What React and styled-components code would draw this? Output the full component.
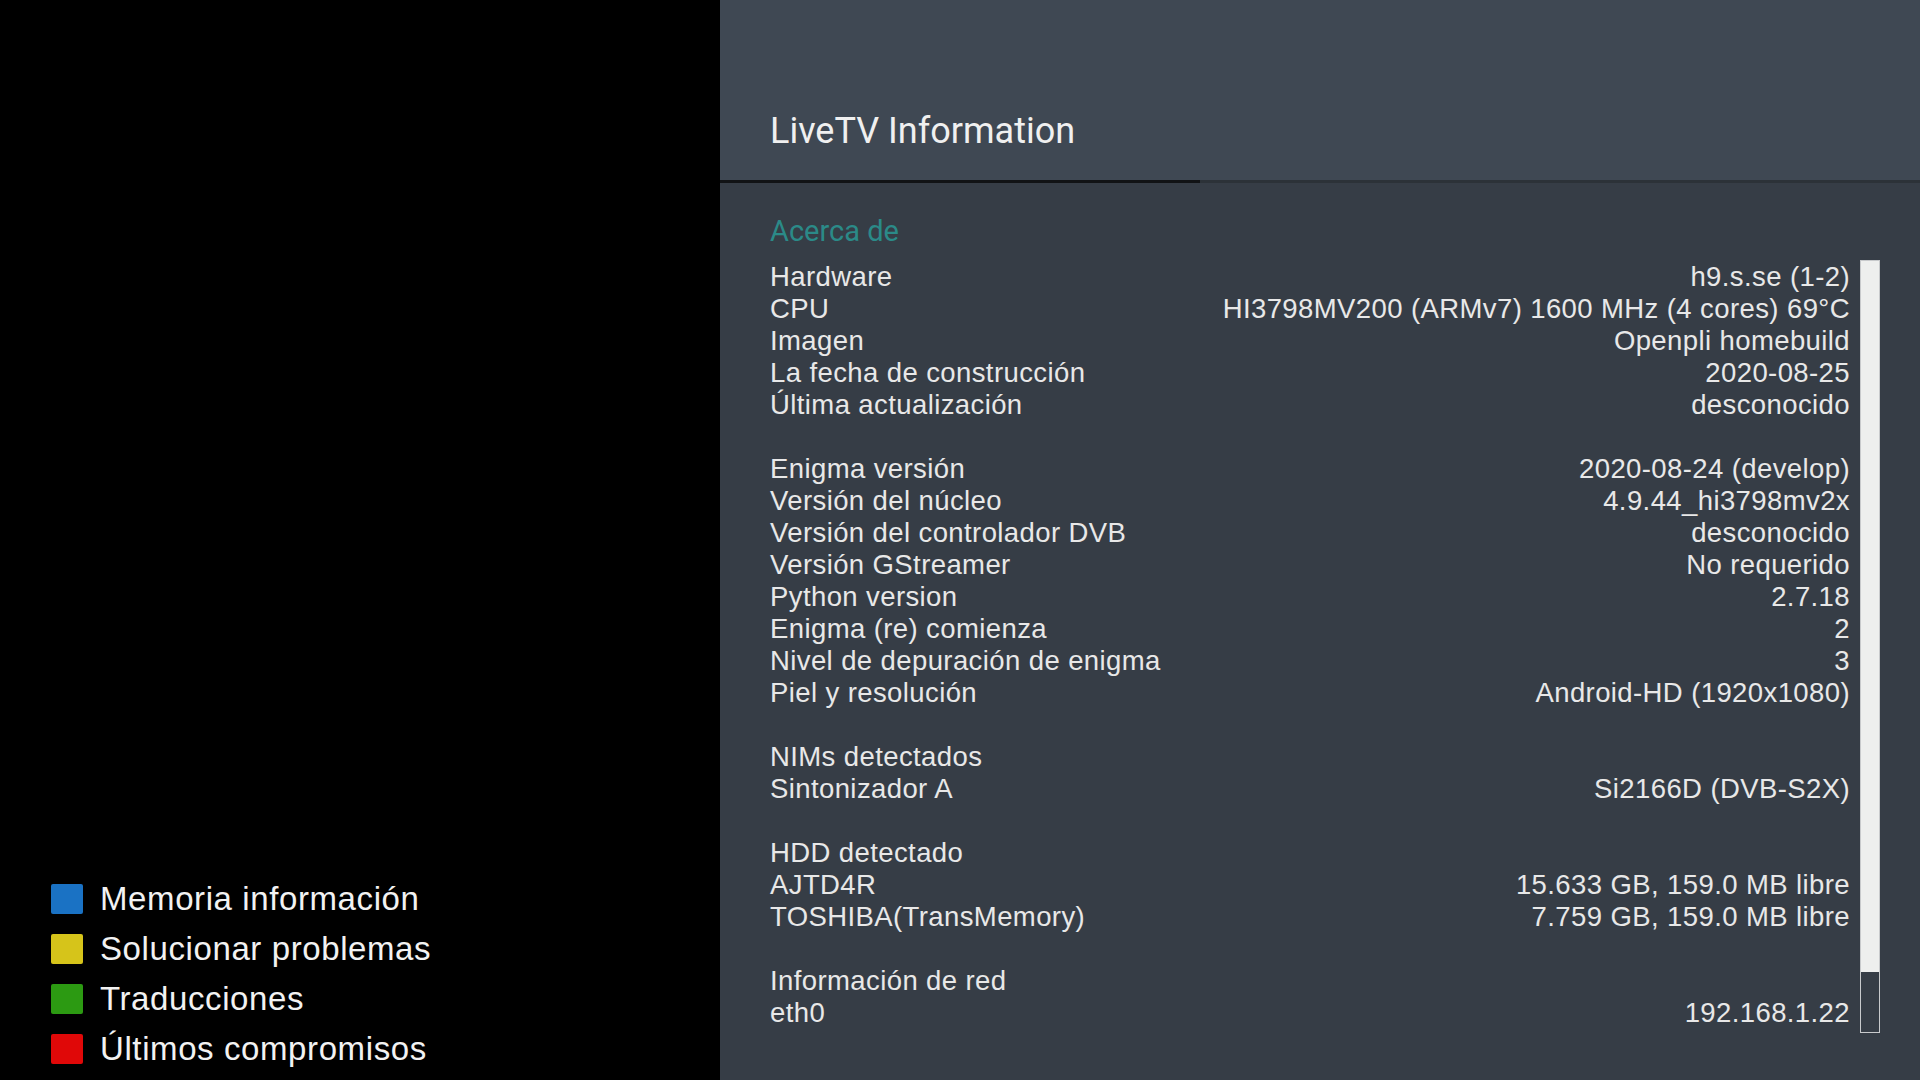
import React from "react";
import styled, { createGlobalStyle } from "styled-components";

const Global = createGlobalStyle`
  html, body { margin: 0; padding: 0; background: #000; }
  body { font-family: "Liberation Sans", Arial, sans-serif; }
  * { box-sizing: border-box; }
`;

const Screen = styled.div`
  display: flex;
  width: 1920px;
  height: 1080px;
  overflow: hidden;
`;

const Sidebar = styled.div`
  width: 720px;
  flex: none;
  background: #000;
  display: flex;
  flex-direction: column;
  justify-content: flex-end;
  padding: 0 0 6px 51px;
`;

const LegendRow = styled.div`
  display: flex;
  align-items: center;
  height: 50px;
  gap: 17px;
`;

const Swatch = styled.span`
  width: 32px;
  height: 30px;
  border-radius: 2px;
  background: ${(p) => p.$color};
  flex: none;
`;

const LegendText = styled.span`
  font-family: "Liberation Sans", Arial, sans-serif;
  font-size: 33px;
  letter-spacing: 0.6px;
  color: #f2f2f2;
`;

const Panel = styled.div`
  flex: 1;
  display: flex;
  flex-direction: column;
  background: #363d46;
`;

const Header = styled.div`
  height: 180px;
  background: #3f4853;
  display: flex;
  align-items: flex-end;
  padding: 0 0 28px 50px;
`;

const Title = styled.h1`
  margin: 0;
  font-family: Roboto, "Liberation Sans", sans-serif;
  font-weight: 400;
  font-size: 36px;
  line-height: 42px;
  color: #f0f0f0;
`;

const Divider = styled.div`
  display: flex;
  height: 3px;
`;

const DividerSeg = styled.div`
  height: 100%;
  background: ${(p) => p.$color};
  width: ${(p) => (p.$w ? p.$w + "px" : "auto")};
  flex: ${(p) => (p.$w ? "none" : "1")};
`;

const Body = styled.div`
  flex: 1;
  display: flex;
  flex-direction: column;
  padding: 32px 40px 0 50px;
`;

const SectionTitle = styled.div`
  font-family: Roboto, "Liberation Sans", sans-serif;
  font-size: 29px;
  line-height: 32px;
  color: #2b8a88;
`;

const ListArea = styled.div`
  display: flex;
  align-items: flex-start;
  gap: 10px;
  margin-top: 11px;
`;

const List = styled.div`
  flex: 1;
  padding-top: 3px;
`;

const Row = styled.div`
  display: flex;
  justify-content: space-between;
  height: 32px;
  font-family: "Liberation Sans", Arial, sans-serif;
  font-size: 27.5px;
  letter-spacing: 0.4px;
  line-height: 32px;
  color: #e8e8e8;
  white-space: nowrap;
`;

const Scrollbar = styled.div`
  width: 20px;
  height: 773px;
  margin-top: 2px;
  flex: none;
  border: 1px solid #c8cacc;
  display: flex;
  flex-direction: column;
`;

const Thumb = styled.div`
  height: 711px;
  background: #eeefee;
`;

const legend = [
  ["#1a72c4", "Memoria información"],
  ["#d6c41a", "Solucionar problemas"],
  ["#2c9a12", "Traducciones"],
  ["#e00808", "Últimos compromisos"],
];

const rows = [
  ["Hardware", "h9.s.se (1-2)"],
  ["CPU", "HI3798MV200 (ARMv7) 1600 MHz (4 cores) 69°C"],
  ["Imagen", "Openpli homebuild"],
  ["La fecha de construcción", "2020-08-25"],
  ["Última actualización", "desconocido"],
  null,
  ["Enigma versión", "2020-08-24 (develop)"],
  ["Versión del núcleo", "4.9.44_hi3798mv2x"],
  ["Versión del controlador DVB", "desconocido"],
  ["Versión GStreamer", "No requerido"],
  ["Python version", "2.7.18"],
  ["Enigma (re) comienza", "2"],
  ["Nivel de depuración de enigma", "3"],
  ["Piel y resolución", "Android-HD (1920x1080)"],
  null,
  ["NIMs detectados", ""],
  ["Sintonizador A", "Si2166D (DVB-S2X)"],
  null,
  ["HDD detectado", ""],
  ["AJTD4R", "15.633 GB, 159.0 MB libre"],
  ["TOSHIBA(TransMemory)", "7.759 GB, 159.0 MB libre"],
  null,
  ["Información de red", ""],
  ["eth0", "192.168.1.22"],
];

export default function App() {
  return (
    <>
      <Global />
      <Screen>
        <Sidebar>
          {legend.map(([c, t]) => (
            <LegendRow key={t}>
              <Swatch $color={c} />
              <LegendText>{t}</LegendText>
            </LegendRow>
          ))}
        </Sidebar>
        <Panel>
          <Header>
            <Title>LiveTV Information</Title>
          </Header>
          <Divider>
            <DividerSeg $w={480} $color="#111315" />
            <DividerSeg $color="#2c3238" />
          </Divider>
          <Body>
            <SectionTitle>Acerca de</SectionTitle>
            <ListArea>
              <List>
                {rows.map((r, i) =>
                  r ? (
                    <Row key={i}>
                      <span>{r[0]}</span>
                      <span>{r[1]}</span>
                    </Row>
                  ) : (
                    <Row key={i} />
                  )
                )}
              </List>
              <Scrollbar>
                <Thumb />
              </Scrollbar>
            </ListArea>
          </Body>
        </Panel>
      </Screen>
    </>
  );
}
